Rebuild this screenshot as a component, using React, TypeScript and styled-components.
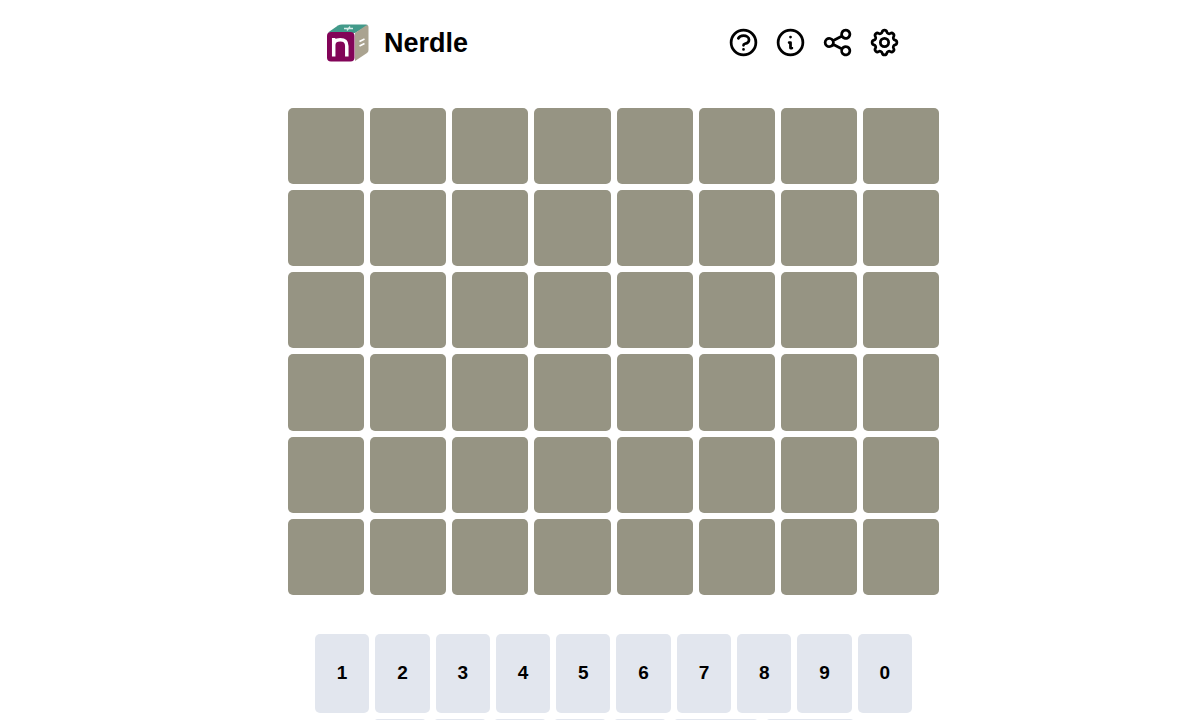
import React from "react";
import styled, { createGlobalStyle } from "styled-components";

const GlobalStyle = createGlobalStyle`
  *, *::before, *::after { box-sizing: border-box; }
  body {
    margin: 0;
    background: #fff;
    color: #000;
    font-family: "Liberation Sans", Arial, sans-serif;
  }
`;

const Page = styled.div`
  display: flex;
  flex-direction: column;
  align-items: center;
  height: 100vh;
  padding-left: 27px;
  overflow: hidden;
`;

const Header = styled.header`
  display: flex;
  align-items: center;
  justify-content: space-between;
  width: 100%;
  max-width: 575px;
  height: 84px;
  padding-top: 1px;
  flex: none;
`;

const Brand = styled.div`
  display: flex;
  align-items: center;
  gap: 15px;
`;

const Title = styled.h1`
  margin: 0;
  font-size: 27px;
  line-height: 32px;
  font-weight: 700;
`;

const Tools = styled.nav`
  display: flex;
  gap: 14px;
`;

const IconButton = styled.button`
  display: flex;
  align-items: center;
  justify-content: center;
  width: 33px;
  height: 33px;
  padding: 0;
  border: 0;
  background: none;
  color: #000;
  cursor: pointer;
`;

const Board = styled.div`
  display: grid;
  grid-template-columns: repeat(8, 1fr);
  gap: 6px;
  width: 100%;
  max-width: 651px;
  margin-top: 24px;
`;

const Cell = styled.div`
  aspect-ratio: 1;
  border-radius: 5px;
  background: #969483;
`;

const Keyboard = styled.div`
  display: flex;
  flex-direction: column;
  gap: 6px;
  width: 100%;
  max-width: 597px;
  margin-top: 39px;
`;

const DigitRow = styled.div`
  display: grid;
  grid-template-columns: repeat(10, 1fr);
  gap: 6px;
`;

const OperatorRow = styled.div`
  display: flex;
  justify-content: center;
  gap: 6px;
`;

const Key = styled.button<{ $width?: number }>`
  width: ${({ $width }) => ($width ? `${$width}px` : "auto")};
  height: 79px;
  padding: 0;
  border: 0;
  border-radius: 5px;
  background: #e2e6ee;
  color: #000;
  font-family: inherit;
  font-size: 19px;
  font-weight: 700;
  cursor: pointer;
`;

const Logo = () => (
  <svg width="43" height="40" viewBox="0 0 43 40" aria-hidden="true">
    <path d="M2 9.500 12 2.500Q13.500 1.500 16 1.500H40Q43 1.500 41 3L29 10Z" fill="#429a8a" />
    <path d="M29 10 40 2.500Q42.500 1.500 42.500 4V27Q42.500 29 41 30L29 38Z" fill="#aaa390" />
    <rect x="1" y="9" width="27.500" height="29.500" rx="4" fill="#820458" />
    <path d="M7.700 33.500V15M7.700 22C7.700 18.500 10.500 16.800 14.300 16.800C18.800 16.800 20.800 19 20.800 23V33.500" fill="none" stroke="#fff" strokeWidth="3.500" />
    <path d="M18 5.500H27M24 3.500 21 7.500" fill="none" stroke="#d5ebe7" strokeWidth="1.300" />
    <path d="M33.500 18.500 38.500 16M33.500 23 38.500 20.500" fill="none" stroke="#fff" strokeWidth="1.500" />
  </svg>
);

const iconPaths = {
  help: [
    "M8.228 9c.549-1.165 2.030-2 3.772-2 2.210 0 4 1.343 4 3 0 1.400-1.278 2.575-3.006 2.907-.542.104-.994.540-.994 1.093m0 3h.01",
    "M21 12a9 9 0 11-18 0 9 9 0 0118 0z",
  ],
  info: ["M13 16h-1v-4h-1m1-4h.01", "M21 12a9 9 0 11-18 0 9 9 0 0118 0z"],
  share: [
    "M8.684 13.342C8.886 12.938 9 12.482 9 12c0-.482-.114-.938-.316-1.342m0 2.684a3 3 0 110-2.684m0 2.684l6.632 3.316m-6.632-6l6.632-3.316m0 0a3 3 0 105.367-2.684 3 3 0 00-5.367 2.684zm0 9.316a3 3 0 105.368 2.684 3 3 0 00-5.368-2.684z",
  ],
  settings: [
    "M10.325 4.317c.426-1.756 2.924-1.756 3.350 0a1.724 1.724 0 002.573 1.066c1.543-.94 3.310.826 2.370 2.370a1.724 1.724 0 001.065 2.572c1.756.426 1.756 2.924 0 3.350a1.724 1.724 0 00-1.066 2.573c.94 1.543-.826 3.310-2.370 2.370a1.724 1.724 0 00-2.572 1.065c-.426 1.756-2.924 1.756-3.350 0a1.724 1.724 0 00-2.573-1.066c-1.543.94-3.310-.826-2.370-2.370a1.724 1.724 0 00-1.065-2.572c-1.756-.426-1.756-2.924 0-3.350a1.724 1.724 0 001.066-2.573c-.94-1.543.826-3.310 2.370-2.370.996.608 2.296.070 2.572-1.065z",
    "M15 12a3 3 0 11-6 0 3 3 0 016 0z",
  ],
};

const Icon = ({ name }: { name: keyof typeof iconPaths }) => (
  <svg
    width="33"
    height="33"
    viewBox="0 0 24 24"
    fill="none"
    stroke="currentColor"
    strokeWidth="2"
    strokeLinecap="round"
    strokeLinejoin="round"
    aria-hidden="true"
  >
    {iconPaths[name].map((d) => (
      <path key={d} d={d} />
    ))}
  </svg>
);

const tools: { label: string; icon: keyof typeof iconPaths }[] = [
  { label: "How to play", icon: "help" },
  { label: "About", icon: "info" },
  { label: "Share", icon: "share" },
  { label: "Settings", icon: "settings" },
];

const digits = ["1", "2", "3", "4", "5", "6", "7", "8", "9", "0"];

const operators = [
  { label: "Plus", width: 54 },
  { label: "Minus", width: 54 },
  { label: "Times", width: 54 },
  { label: "Divide", width: 54 },
  { label: "Equals", width: 54 },
  { label: "Enter", width: 86 },
  { label: "Delete", width: 90 },
];

export default function App() {
  return (
    <>
      <GlobalStyle />
      <Page>
        <Header>
          <Brand>
            <Logo />
            <Title>Nerdle</Title>
          </Brand>
          <Tools aria-label="Game menu">
            {tools.map(({ label, icon }) => (
              <IconButton key={label} type="button" aria-label={label}>
                <Icon name={icon} />
              </IconButton>
            ))}
          </Tools>
        </Header>
        <Board>
          {Array.from({ length: 48 }, (_, i) => (
            <Cell key={i} />
          ))}
        </Board>
        <Keyboard>
          <DigitRow>
            {digits.map((d) => (
              <Key key={d} type="button">{d}</Key>
            ))}
          </DigitRow>
          <OperatorRow>
            {operators.map(({ label, width }) => (
              <Key key={label} type="button" $width={width} aria-label={label} />
            ))}
          </OperatorRow>
        </Keyboard>
      </Page>
    </>
  );
}
